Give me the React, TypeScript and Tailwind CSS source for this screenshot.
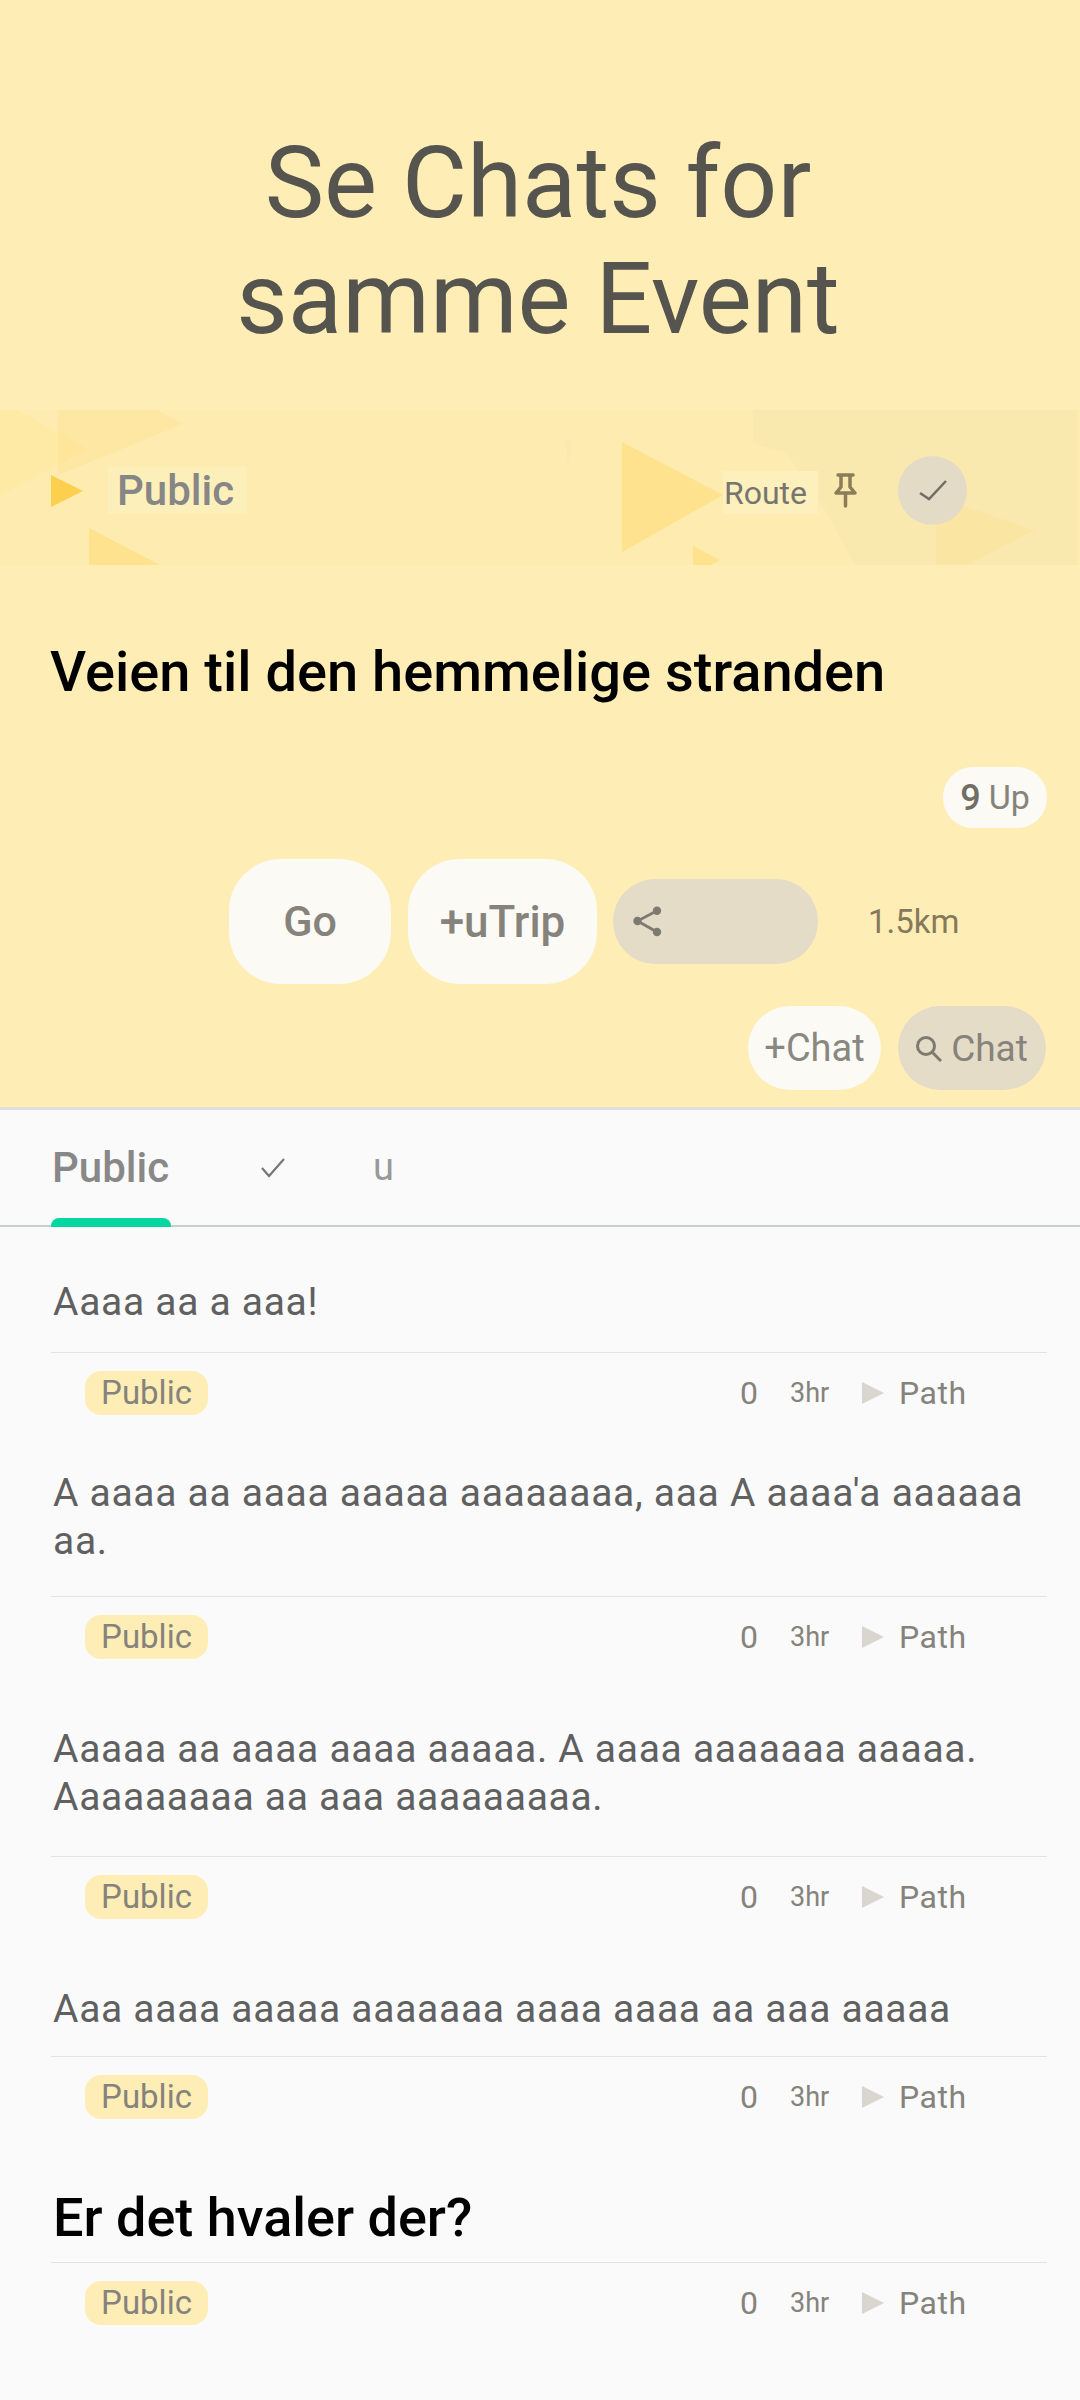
const posts = [
  { lines: ['Aaaa aa a aaa!'], top: 'pt-[51px] pb-[26px]', heading: false },
  { lines: ["A aaaa aa aaaa aaaaa aaaaaaaa, aaa A aaaa'a aaaaaa", 'aa.'], top: 'pt-[36px] pb-[31px]', heading: false },
  { lines: ['Aaaaa aa aaaa aaaa aaaaa. A aaaa aaaaaaa aaaaa.', 'Aaaaaaaaa aa aaa aaaaaaaaa.'], top: 'pt-[48px] pb-[35px]', heading: false },
  { lines: ['Aaa aaaa aaaaa aaaaaaa aaaa aaaa aa aaa aaaaa'], top: 'pt-[48px] pb-[23px]', heading: false },
  { lines: ['Er det hvaler der?'], top: 'pt-[49px] pb-[12px]', heading: true },
];

function Banner() {
  return (
    <div className="relative h-[155px] pt-[5px] flex items-center">
      {/* Background triangles */}
      <svg className="absolute inset-0" width="1080" height="155" viewBox="0 410 1080 155">
        <rect x="0" y="410" width="1080" height="155" fill="#fdebb0" />
        <polygon points="753,410 1077,410 1077,565 855,565 827,513 787,453 753,443" fill="#f9e9ae" />
        <polygon points="566,440 571,440 568,468" fill="#f8e8b2" />
        <polygon points="0,410 17,410 88,450 0,495" fill="#feeaa4" />
        <polygon points="58,410 157,410 183,424 58,475" fill="#fde7a3" />
        <polygon points="58,431 88,450 58,465" fill="#fee59a" />
        <polygon points="51,475 83,491 51,507" fill="#fdcf4e" />
        <polygon points="89,528 160,565 89,565" fill="#fee28e" />
        <polygon points="622,442 723,495 622,552" fill="#fee28e" />
        <polygon points="693,546 720,560 711,565 693,565" fill="#fee28e" />
        <polygon points="936,497 1035,530 967,565 936,565" fill="#fae5a2" />
      </svg>
      <div className="relative w-full flex items-center">
        <span className="ml-[108px] h-[47px] w-[139px] pl-[9px] bg-[#fdefba] flex items-center text-[42px] font-medium text-[#868686]">
          Public
        </span>
        <span className="ml-auto mt-[5px] h-[43px] w-[95px] pl-[1px] bg-[#fdf0bd] flex items-center text-[32px] text-[#76756e]">
          Route
        </span>
        <svg className="ml-[15px] mr-[40px]" width="25" height="35" viewBox="0 0 25 35" fill="none" stroke="#8a7d58" strokeWidth="3.5" strokeLinecap="round" strokeLinejoin="round">
          <path d="M5 2H20M8 2V14L3 20H22L17 14V2M12.5 20V33" />
        </svg>
        <span className="mr-[113px] h-[69px] w-[69px] rounded-full bg-[#e3dbc5] flex items-center justify-center">
          <svg width="28" height="21" viewBox="0 0 28 21" fill="none" stroke="#716e66" strokeWidth="2.5">
            <polyline points="1,13 10,19 27,1" />
          </svg>
        </span>
      </div>
    </div>
  );
}

function Meta() {
  return (
    <div className="h-[80px] flex items-center ml-[85px] text-[#85837b]">
      <span className="h-[44px] w-[123px] rounded-[16px] bg-[#feeeb6] flex items-center justify-center text-[33px]">
        Public
      </span>
      <span className="ml-[532px] w-[16px] text-[32px] tracking-[0.5px]">0</span>
      <span className="ml-[34px] w-[40px] text-[27px]">3hr</span>
      <svg className="ml-[32px]" width="22" height="22" viewBox="0 0 22 22">
        <polygon points="0,0 22,11 0,22" fill="#d8d6cf" />
      </svg>
      <span className="ml-[15px] text-[32px] tracking-[0.5px]">Path</span>
    </div>
  );
}

export default function App() {
  return (
    <div className="w-[1080px] h-[2400px] bg-[#fafafa] overflow-hidden font-['Roboto',sans-serif]">
      <div className="h-[1107px] bg-[#feeeb6] flex flex-col">
        <h1 className="pt-[125px] pr-[4px] h-[410px] text-center text-[100px] leading-[116px] text-[#55544f]">
          Se Chats for
          <br />
          samme Event
        </h1>
        <Banner />
        <h2 className="mt-[72px] ml-[50px] text-[56px] leading-[70px] font-medium text-black">
          Veien til den hemmelige stranden
        </h2>
        <div className="mt-[60px] mr-[33px] self-end h-[61px] w-[104px] rounded-[30px] bg-[#fbfaf5] flex items-center justify-center text-[34px] text-[#85837b]">
          <span className="text-[36px] font-medium text-[#716e66]">9</span>
          <span className="ml-[8px]">Up</span>
        </div>
        <div className="mt-[31px] flex items-center ml-[229px]">
          <span className="h-[125px] w-[162px] rounded-[52px] bg-[#fbfaf5] flex items-center justify-center text-[43px] font-medium text-[#85837b]">
            Go
          </span>
          <span className="ml-[17px] h-[125px] w-[189px] rounded-[52px] bg-[#fbfaf5] flex items-center justify-center text-[44px] font-medium text-[#85837b]">
            +uTrip
          </span>
          <span className="ml-[16px] h-[85px] w-[205px] rounded-[42px] bg-[#e5dcc8] flex items-center pl-[20px]">
            {/* Share icon */}
            <svg width="29" height="31" viewBox="0 0 29 31" fill="#7d7a6f" stroke="#7d7a6f">
              <circle cx="24" cy="4.8" r="4.2" strokeWidth="0" />
              <circle cx="4.5" cy="15" r="4.2" strokeWidth="0" />
              <circle cx="24" cy="26" r="4.2" strokeWidth="0" />
              <path d="M24 4.8L4.5 15L24 26" fill="none" strokeWidth="2.8" />
            </svg>
          </span>
          <span className="ml-[50px] text-[33px] text-[#85795c]">1.5km</span>
        </div>
        <div className="mt-[22px] mr-[34px] flex justify-end gap-[17px]">
          <span className="h-[84px] w-[133px] rounded-[42px] bg-[#fbfaf5] pt-[1px] flex items-center justify-center text-[38px] text-[#888780]">
            +Chat
          </span>
          <span className="h-[84px] w-[148px] rounded-[42px] bg-[#e5dcc8] pt-[1px] flex items-center justify-center gap-[9px] text-[37px] text-[#85837b]">
            {/* Search icon */}
            <svg width="26" height="26" viewBox="0 0 26 26" fill="none" stroke="#7d7a6f" strokeWidth="3">
              <circle cx="10" cy="10" r="8.5" />
              <path d="M16 16L25 25" />
            </svg>
            Chat
          </span>
        </div>
      </div>
      <div className="h-[120px] border-t-[3px] border-t-[#e0e0dc] border-b-[2px] border-b-[#c5d0cc] relative flex items-center">
        <span className="ml-[52px] text-[42px] font-medium text-[#888888]">Public</span>
        <svg className="ml-[92px]" width="24" height="20" viewBox="0 0 24 20" fill="none" stroke="#777777" strokeWidth="2.2">
          <polyline points="1,10 8,18 23,1" />
        </svg>
        <span className="ml-[88px] text-[38px] text-[#999999]">u</span>
        <div className="absolute left-[51px] bottom-[-2px] h-[9px] w-[120px] rounded-t-[8px] bg-[#06d6a0]" />
      </div>
      {posts.map((post) => (
        <div key={post.lines[0]}>
          <div className={`ml-[51px] mr-[33px] pl-[2px] border-b-[1.5px] border-[#e3e3e3] ${post.top}`}>
            {post.lines.map((line) => (
              <p
                key={line}
                className={
                  post.heading
                    ? 'text-[54px] leading-[64px] font-medium text-black'
                    : 'text-[39px] leading-[48px] tracking-[0.7px] text-[#606060]'
                }
              >
                {line}
              </p>
            ))}
          </div>
          <Meta />
        </div>
      ))}
    </div>
  );
}
